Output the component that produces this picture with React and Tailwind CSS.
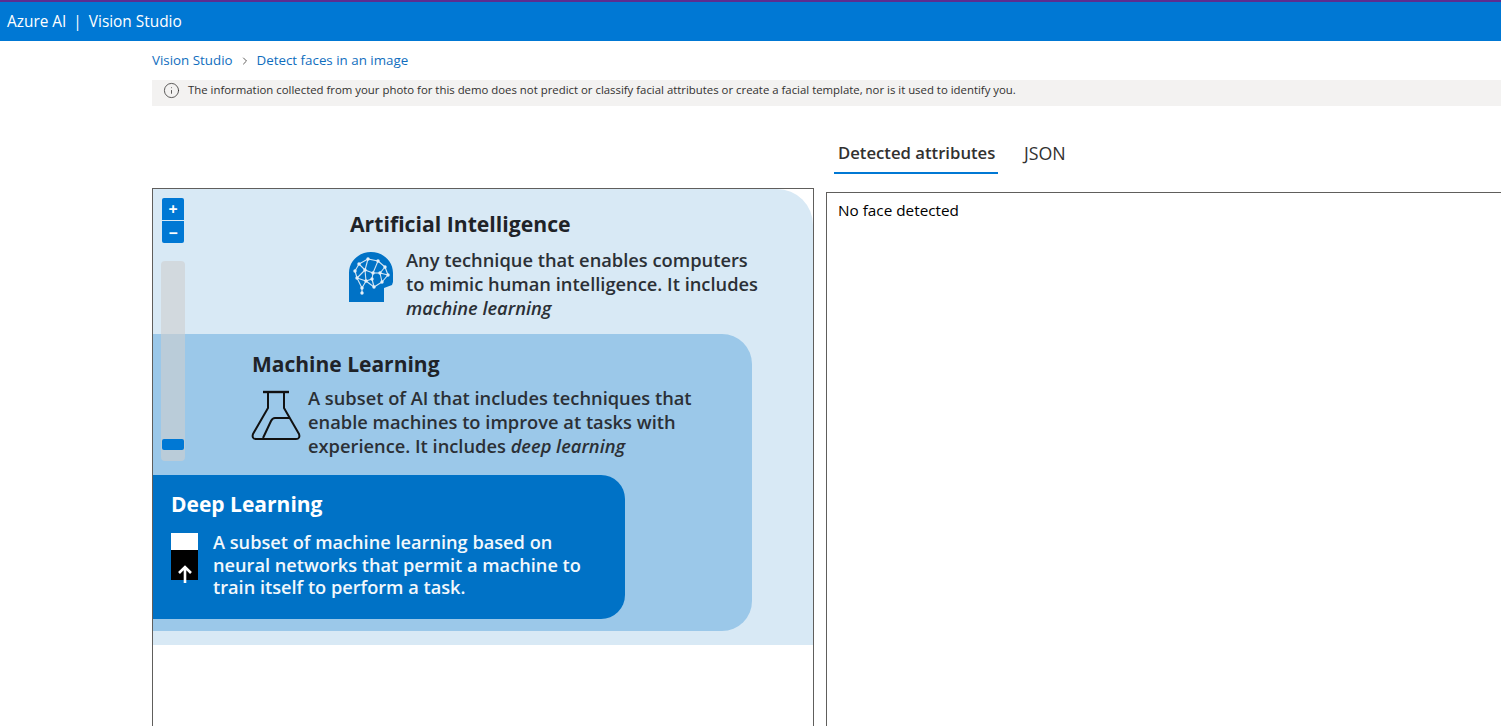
import { ChevronRight, Info } from 'lucide-react';

const FONT = "font-['Open_Sans','Noto_Sans',sans-serif]";

function BrainHead() {
    const nodes = [[10, 12], [19, 7], [29, 9], [36, 15], [39, 23], [33, 30], [25, 35], [17, 29], [8, 26], [6, 19], [24, 21], [16, 18], [31, 21], [13, 36], [13, 41], [23, 27]];
    const links = [[0, 1], [1, 2], [2, 3], [3, 4], [4, 5], [5, 6], [6, 7], [7, 8], [8, 9], [9, 0], [1, 11], [11, 0], [11, 8], [11, 7], [11, 10], [10, 2], [10, 12], [12, 3], [12, 4], [12, 5], [10, 15], [15, 6], [15, 7], [7, 13], [13, 14], [8, 13]];
    return (
        <svg width="45" height="50" viewBox="0 0 45 50" className="shrink-0">
            <path d="M0 50V21C0 9 10 0 22 0s22 9 22 21v9l-1 3-8 3v14z" fill="#0072c6" />
            {links.map(([a, b], i) => (
                <line key={i} x1={nodes[a][0]} y1={nodes[a][1]} x2={nodes[b][0]} y2={nodes[b][1]} stroke="#d5e6f4" strokeWidth="1.1" />
            ))}
            {nodes.map(([x, y], i) => (
                <circle key={i} cx={x} cy={y} r="1.7" fill="#e6f0f8" />
            ))}
        </svg>
    );
}

function Flask() {
    return (
        <svg width="50" height="50" viewBox="0 0 50 50" fill="none" stroke="#111" strokeWidth="2" strokeLinejoin="round" className="shrink-0">
            <path d="M12 2h26" strokeWidth="2.4" />
            <path d="M17 2v16L2 44c-1 3 0 5 3 5h40c3 0 4-2 3-5L33 18V2" />
            <path d="M12 48l8-17c1-2 2-3 4-3h15" />
        </svg>
    );
}

function ZoomControl() {
    return (
        <div className="absolute left-[9px] top-[9px] flex w-[22px] flex-col items-stretch">
            <button className="flex h-[22px] items-center justify-center rounded-t-[2px] bg-[#0078d4] text-[16px] font-bold leading-none text-white">+</button>
            <button className="mt-px flex h-[22px] items-center justify-center rounded-b-[2px] bg-[#0078d4] pt-px text-[16px] font-bold leading-none text-white">−</button>
            <div className="relative -mx-px mt-[18px] h-[200px] rounded-[4px] bg-[#cfcfcf]/60">
                <div className="absolute bottom-[11px] left-px h-[11px] w-[22px] rounded-[2px] bg-[#0078d4]" />
            </div>
        </div>
    );
}

function Diagram() {
    return (
        <div className="h-[456px] w-[660px] rounded-tr-[36px] bg-[#d8e9f5] text-[#24292e]">
            <div className="h-[145px] pl-[197px] pt-[20px]">
                <h3 className="text-[21.2px] font-bold leading-[30px] text-[#1f2328]">Artificial Intelligence</h3>
                <div className="mt-[9px] flex gap-[12px]">
                    <div className="-ml-px pt-[4px]"><BrainHead /></div>
                    <p className="text-[18.3px] font-semibold leading-[24px] text-[#2b3036]">
                        Any technique that enables computers<br />
                        to mimic human intelligence. It includes<br />
                        <em>machine learning</em>
                    </p>
                </div>
            </div>
            <div className="h-[297px] w-[599px] rounded-r-[30px] bg-[#9bc8e9]">
                <div className="h-[141px] pl-[99px] pt-[15px]">
                    <h3 className="text-[21px] font-bold leading-[30px] text-[#1f2328]">Machine Learning</h3>
                    <div className="mt-[7px] flex gap-[7px]">
                        <div className="-ml-px pt-[4px]"><Flask /></div>
                        <p className="text-[18.3px] font-semibold leading-[24px] text-[#2b3036]">
                            A subset of AI that includes techniques that<br />
                            enable machines to improve at tasks with<br />
                            experience. It includes <em>deep learning</em>
                        </p>
                    </div>
                </div>
                <div className="h-[144px] w-[472px] rounded-r-[24px] bg-[#0072c6] pl-[18px] pt-[14px] text-white">
                    <h3 className="text-[21px] font-bold leading-[30px]">Deep Learning</h3>
                    <div className="mt-[12px] flex gap-[15px]">
                        <div className="mt-[2px] flex h-[47px] w-[27px] shrink-0 flex-col">
                            <div className="h-[17px] bg-white" />
                            <div className="flex flex-1 items-end justify-center bg-black">
                                <svg width="16" height="20" viewBox="0 0 16 20" className="-mb-[4px]">
                                    <path d="M8 19V3M2 9l6-6 6 6" fill="none" stroke="#fff" strokeWidth="2.6" />
                                </svg>
                            </div>
                        </div>
                        <p className="text-[18.2px] font-semibold leading-[22.5px] text-[#f2f8fc]">
                            A subset of machine learning based on<br />
                            neural networks that permit a machine to<br />
                            train itself to perform a task.
                        </p>
                    </div>
                </div>
            </div>
        </div>
    );
}

export default function App() {
    return (
        <div className={`${FONT} h-[726px] w-[1501px] overflow-hidden bg-white`}>
            <header className="flex h-[41px] items-center border-t-2 border-[#5c2d91] bg-[#0078d4] pl-[7px] text-[15.4px] text-white">
                <span>Azure AI</span>
                <span className="mx-[7px] inline-block">|</span>
                <span>Vision Studio</span>
            </header>

            <main className="pl-[152px]">
                <nav className="flex h-[39px] items-center text-[13.35px] text-[#106ebe]">
                    <span>Vision Studio</span>
                    <ChevronRight size={12} className="mx-[6px] text-[#605e5c]" />
                    <span>Detect faces in an image</span>
                </nav>
                <div className="flex h-[26px] items-center bg-[#f3f2f1] pb-[6px] pl-[11px] text-[11.38px] text-[#323130]">
                    <Info size={17} strokeWidth={1.1} className="mr-[8px]" />
                    The information collected from your photo for this demo does not predict or classify facial attributes or create a facial template, nor is it used to identify you.
                </div>

                <div className="flex w-[1400px] gap-[12px]">
                    <div className="relative mt-[82px] h-[600px] w-[662px] shrink-0 border border-[#605e5c]">
                        <Diagram />
                        <ZoomControl />
                    </div>
                    <div className="flex-1">
                        <div className="mt-[26px] flex h-[42px] pl-[8px] text-[17.8px] text-[#323130]">
                            <div className="w-[164px] whitespace-nowrap border-b-2 border-[#0078d4] pl-[4px] pt-[9px] text-[16.7px] font-semibold leading-[24px]">Detected attributes</div>
                            <div className="ml-[26px] pt-[9px] leading-[24px]">JSON</div>
                        </div>
                        <div className="mt-[18px] h-[600px] border border-[#605e5c] px-[11px] pt-[6px] text-[15.3px] leading-[22px] text-black">
                            No face detected
                        </div>
                    </div>
                </div>
            </main>
        </div>
    );
}
